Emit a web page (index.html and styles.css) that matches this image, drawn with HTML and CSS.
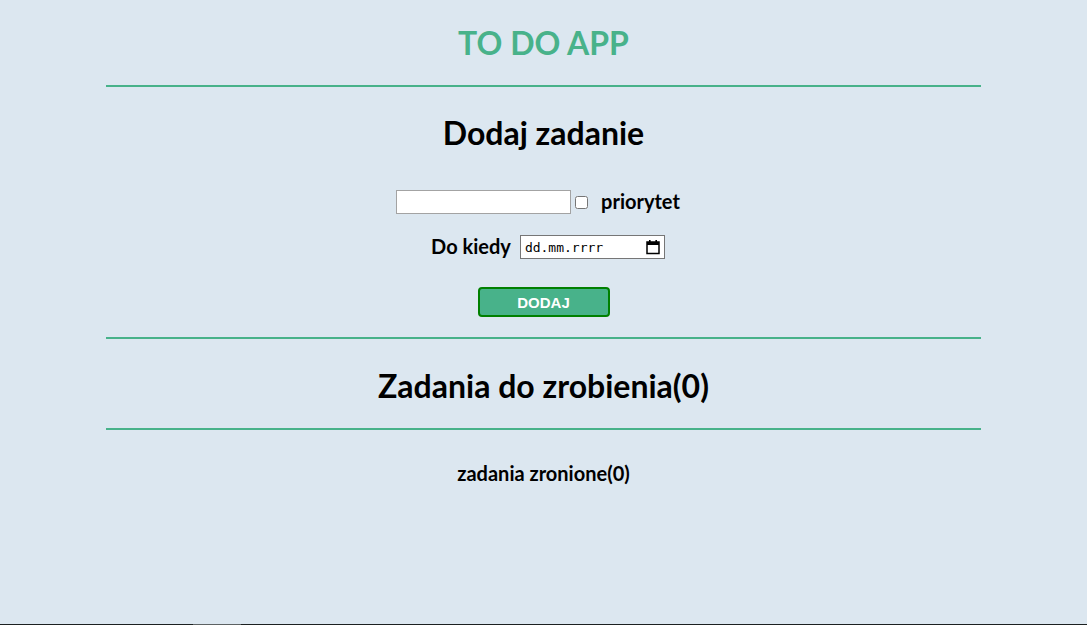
FILE: index.html
```html
<!DOCTYPE html>
<html lang="pl">
<head>
<meta charset="utf-8">
<title>TO DO APP</title>
<link rel="stylesheet" href="styles.css">
</head>
<body>
<main class="app">
  <h1 class="app-title">TO DO APP</h1>
  <hr class="rule">
  <section class="add">
    <h2 class="section-title">Dodaj zadanie</h2>
    <div class="form-row row-task">
      <input class="text-input" type="text">
      <input class="check" type="checkbox" id="prio">
      <label class="label label-prio" for="prio">priorytet</label>
    </div>
    <div class="form-row row-date">
      <span class="label label-date">Do kiedy</span>
      <div class="date-input">
        <span class="date-text">dd.mm.rrrr</span>
        <svg class="cal" width="16" height="16" viewBox="0 0 16 16">
          <rect x="2" y="3" width="12" height="11.5" fill="none" stroke="#000" stroke-width="1.5"/>
          <rect x="2" y="3" width="12" height="3" fill="#000"/>
          <rect x="4" y="1" width="1.6" height="3" fill="#000"/>
          <rect x="10.4" y="1" width="1.6" height="3" fill="#000"/>
        </svg>
      </div>
    </div>
    <button class="btn" type="button">DODAJ</button>
  </section>
  <hr class="rule rule-mid">
  <h2 class="section-title todo-title">Zadania do zrobienia(0)</h2>
  <hr class="rule rule-low">
  <h3 class="done-title">zadania zronione(0)</h3>
</main>
<div class="taskbar"><span class="taskbar-mark"></span></div>
</body>
</html>
```
FILE: styles.css
```css
html, body {
  margin: 0;
  padding: 0;
}
body {
  background: #dce7f0;
  font-family: Lato, "Noto Sans", sans-serif;
  color: #000;
  height: 625px;
  overflow: hidden;
}
.app {
  display: flex;
  flex-direction: column;
  align-items: center;
}
.app-title {
  margin: 23px 0 0;
  font-size: 32px;
  line-height: 40px;
  font-weight: 700;
  color: #48b28a;
}
.rule {
  width: 875px;
  height: 2px;
  border: 0;
  margin: 22px 0 0;
  background: #48b28a;
}
.add {
  display: flex;
  flex-direction: column;
  align-items: center;
}
.section-title {
  margin: 26px 0 0;
  font-size: 32px;
  line-height: 40px;
  font-weight: 700;
}
.form-row {
  display: flex;
  align-items: center;
  height: 24px;
}
.row-task {
  margin-top: 37px;
}
.text-input {
  box-sizing: border-box;
  width: 175px;
  height: 24px;
  margin: 0;
  border: 1px solid #a3a3a3;
  background: #fff;
}
.check {
  width: 13px;
  height: 13px;
  margin: 0 0 0 4px;
}
.label {
  font-size: 20px;
  line-height: 24px;
  font-weight: 700;
}
.label-prio {
  margin-left: 13px;
  margin-right: 11px;
  transform: translateY(-1px);
}
.row-date {
  margin-top: 21px;
}
.label-date {
  margin-left: 9px;
  margin-right: 9px;
  transform: translateY(-1px);
}
.date-input {
  box-sizing: border-box;
  width: 145px;
  height: 24px;
  background: #fff;
  border: 1px solid #767676;
  display: flex;
  align-items: center;
  justify-content: space-between;
  padding: 0 3px 0 4px;
}
.date-text {
  font-family: "DejaVu Sans Mono", "Liberation Mono", monospace;
  font-size: 13px;
}
.cal {
  display: block;
}
.btn {
  box-sizing: border-box;
  margin-top: 28px;
  width: 132px;
  height: 30px;
  background: #48b28a;
  border: 2px solid #008000;
  border-radius: 4px;
  color: #fff;
  font-family: "Liberation Sans", Arial, sans-serif;
  font-weight: 700;
  font-size: 15px;
  padding: 0;
}
.rule-mid {
  margin-top: 20px;
}
.todo-title {
  margin-top: 27px;
}
.rule-low {
  margin-top: 22px;
}
.done-title {
  margin: 31px 0 0;
  font-size: 20px;
  line-height: 24px;
  font-weight: 700;
}
.taskbar {
  position: fixed;
  left: 0;
  right: 0;
  bottom: 0;
  height: 1px;
  background: #1b2020;
}
.taskbar-mark {
  position: absolute;
  left: 193px;
  width: 48px;
  height: 1px;
  background: #5d6263;
}
```
